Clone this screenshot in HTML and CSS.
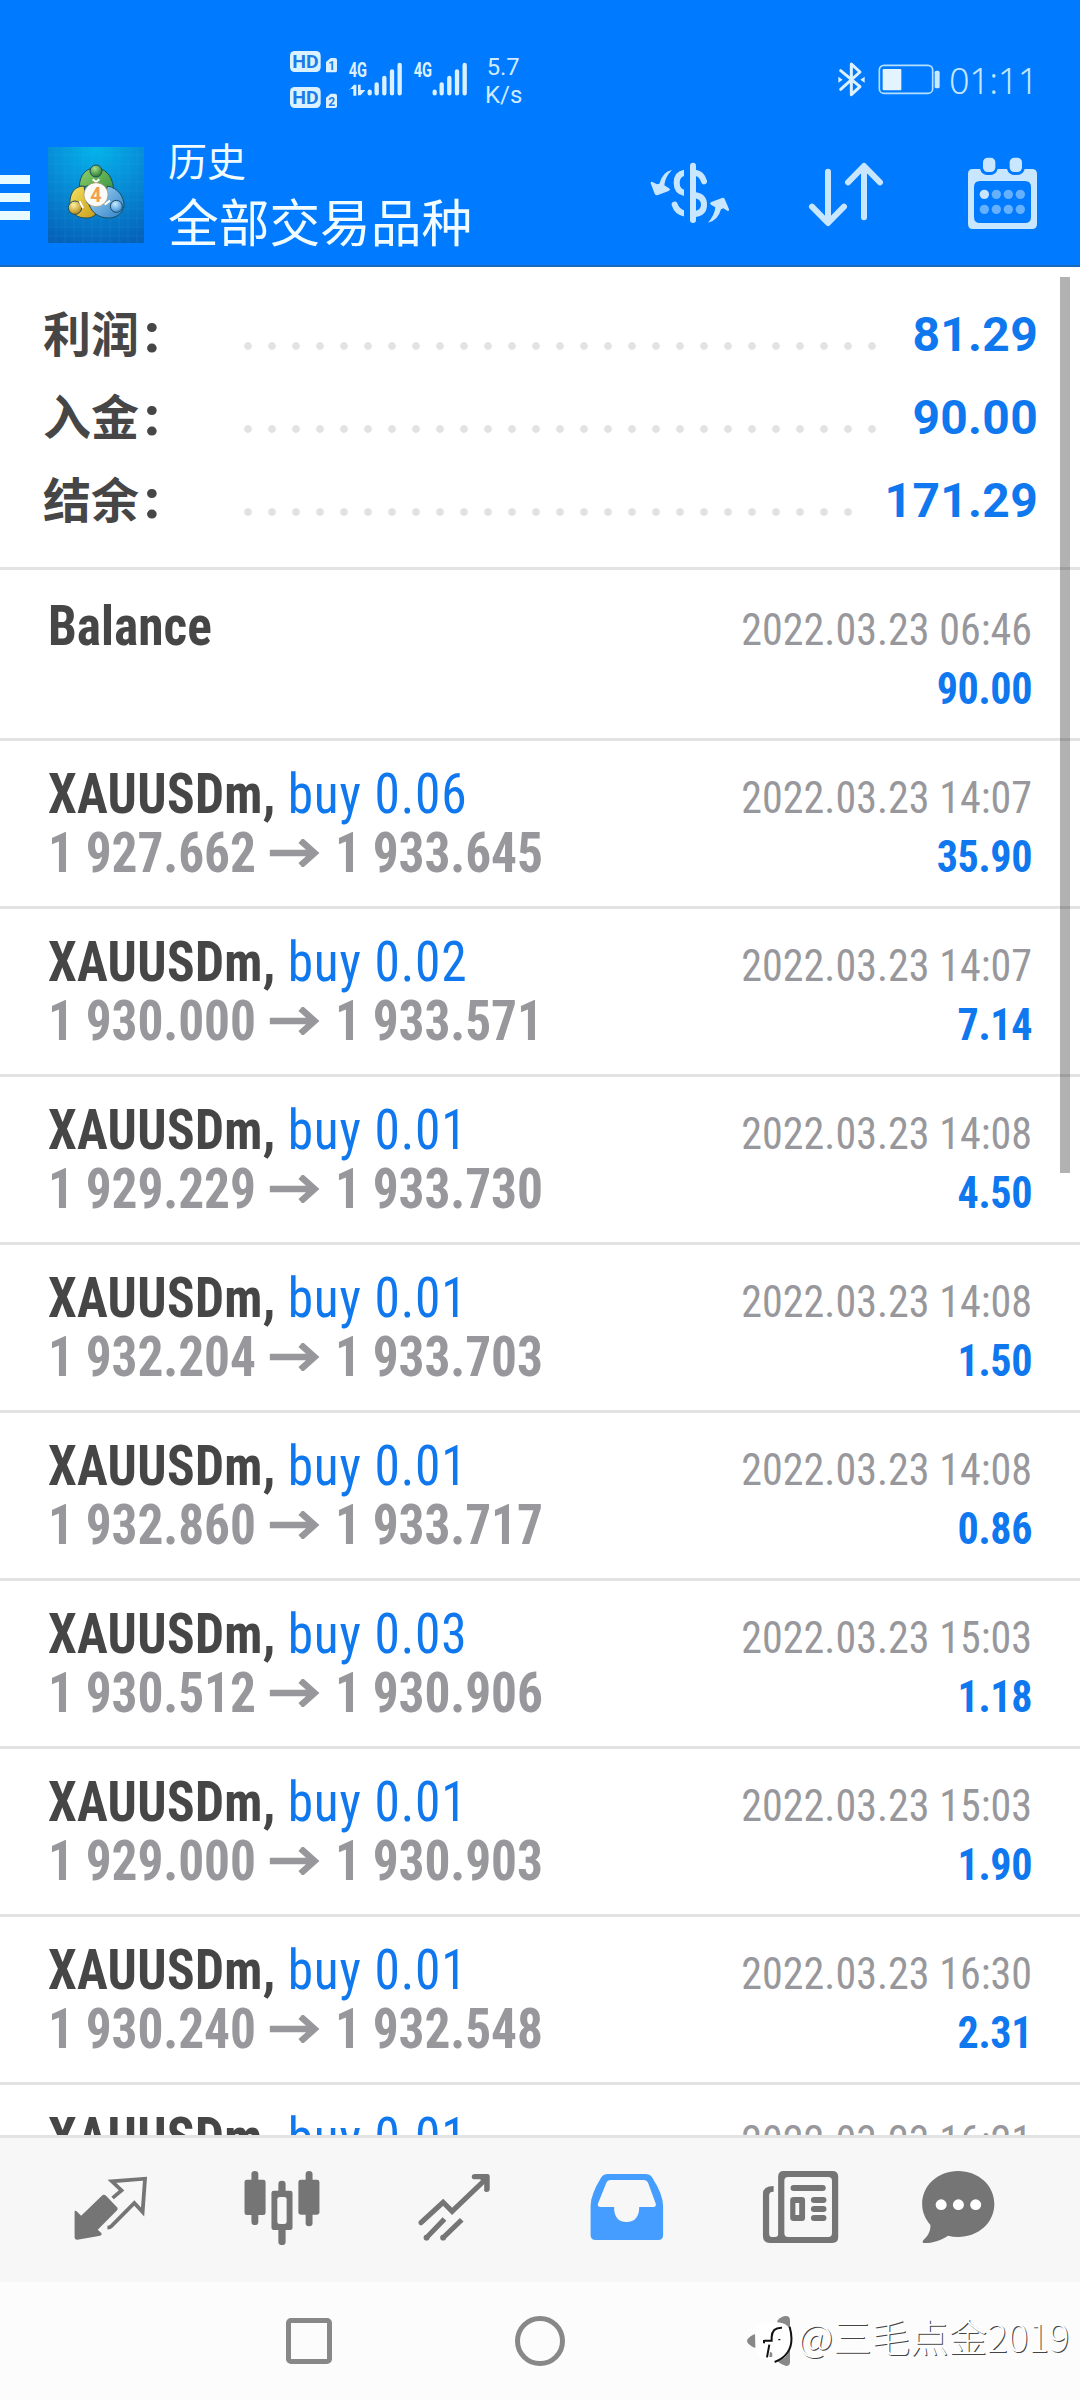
FILE: index.html
```html
<!DOCTYPE html>
<html lang="zh-CN">
<head>
<meta charset="utf-8">
<title>历史</title>
<link rel="stylesheet" href="styles.css">
</head>
<body>
<header class="header">
  <div class="status">
    <svg class="status-left" viewBox="0 0 840 240">
      <g fill="#dcf1ff">
        <rect x="60" y="33" width="92" height="63" rx="14"/>
        <rect x="60" y="141" width="92" height="63" rx="14"/>
        <path d="M168 97V66l14-12h13q6 0 6 6v32q0 5-6 5zM168 204v-31l14-12h13q6 0 6 6v32q0 5-6 5z"/>
        <text class="sig" x="236" y="111" textLength="55" lengthAdjust="spacingAndGlyphs">4G</text>
        <text class="sig" x="431" y="111" textLength="55" lengthAdjust="spacingAndGlyphs">4G</text>
        <path d="M238 150l14-16h7v33h-9v-20h-12zM264 134h8v16h14l-14 16h-8z"/>
      </g>
      <g class="bars">
        <path d="M299 155v5M320 133v27M343 114v46M366 94v66M389 75v85M494 155v5M515 133v27M538 114v46M561 94v66M584 75v85"/>
      </g>
      <g class="knock">
        <text x="67" y="84" textLength="79" lengthAdjust="spacingAndGlyphs">HD</text>
        <text x="67" y="192" textLength="79" lengthAdjust="spacingAndGlyphs">HD</text>
        <text class="sim" x="175" y="91">1</text>
        <text class="sim" x="175" y="198">2</text>
      </g>
      <g class="speed">
        <text x="650" y="105" textLength="99" lengthAdjust="spacingAndGlyphs">5.7</text>
        <text x="645" y="189" textLength="112" lengthAdjust="spacingAndGlyphs">K/s</text>
      </g>
    </svg>
    <div class="status-right">
      <svg class="status-icons" viewBox="48 30 318 114">
        <path d="M62 62l58 48-26 24V42l26 24-58 52" fill="none" stroke="#dcf1ff" stroke-width="9" stroke-linejoin="round" stroke-linecap="round"/>
        <path d="M55 80l13 9-13 9zM134 80l-13 9 13 9z" fill="#dcf1ff"/>
        <rect x="178" y="46" width="160" height="84" rx="14" fill="none" stroke="#b4e0ff" stroke-width="5"/>
        <rect x="188" y="57" width="56" height="64" rx="3" fill="#e4f4ff"/>
        <rect x="344" y="62" width="15" height="53" rx="5" fill="#c9e9ff"/>
      </svg>
      <span class="clock">01:11</span>
    </div>
  </div>
  <div class="appbar">
    <div class="menu"><i></i><i></i><i></i></div>
    <svg class="logo" viewBox="144 51 288 288">
      <defs>
        <radialGradient id="bg" cx=".5" cy="0" r="1.05"><stop offset="0" stop-color="#03b4ea"/><stop offset=".45" stop-color="#078fd8"/><stop offset="1" stop-color="#0562b8"/></radialGradient>
        <linearGradient id="gr" x1="0" y1="0" x2="1" y2="1"><stop offset="0" stop-color="#8fd26b"/><stop offset="1" stop-color="#2c8a3a"/></linearGradient>
        <linearGradient id="ye" x1="0" y1="0" x2="1" y2="1"><stop offset="0" stop-color="#f6e45e"/><stop offset="1" stop-color="#c79a1a"/></linearGradient>
        <linearGradient id="bl" x1="0" y1="0" x2="1" y2="1"><stop offset="0" stop-color="#a6d9f6"/><stop offset="1" stop-color="#2f7fc8"/></linearGradient>
        <radialGradient id="gb" cx=".4" cy=".3" r=".7"><stop offset="0" stop-color="#a7e08a"/><stop offset="1" stop-color="#2c7a35"/></radialGradient>
        <radialGradient id="yb" cx=".4" cy=".3" r=".7"><stop offset="0" stop-color="#fff0a0"/><stop offset="1" stop-color="#b58a18"/></radialGradient>
        <radialGradient id="bb" cx=".4" cy=".3" r=".7"><stop offset="0" stop-color="#c8ebff"/><stop offset="1" stop-color="#3c8fd6"/></radialGradient>
      </defs>
      <rect x="144" y="51" width="288" height="288" fill="url(#bg)"/>
      <path d="M168 51v288M195 51v288M222 51v288M249 51v288M276 51v288M303 51v288M330 51v288M357 51v288M384 51v288M411 51v288M144 75h288M144 102h288M144 129h288M144 156h288M144 183h288M144 210h288M144 237h288M144 264h288M144 291h288M144 318h288" stroke="#4cc0f4" stroke-opacity=".18" stroke-width="2"/>
      <g stroke="#1c4d5c" stroke-width="3">
        <path d="M238 168c2-34 20-54 48-54s50 22 54 56c1 20-8 34-22 40l-30-50-34 10z" fill="url(#gr)"/>
        <path d="M252 168c-34 0-44 30-42 56 4 28 22 40 48 40 18 0 26-6 32-16l-30-30z" fill="url(#ye)"/>
        <path d="M322 168c34 6 50 34 50 58-4 26-24 38-46 38-32 0-50-18-58-38l44-8z" fill="url(#bl)"/>
        <circle cx="288" cy="123" r="18" fill="url(#gb)"/>
        <circle cx="225" cy="233" r="20" fill="url(#yb)"/>
        <circle cx="349" cy="229" r="18" fill="url(#bb)"/>
      </g>
      <path d="M278 148l10 8 10-8M239 214l10 20M314 224l16-12" fill="none" stroke="#fff" stroke-width="6"/>
      <circle cx="288" cy="194" r="36" fill="#fbfbf8" stroke="#a88b62" stroke-width="2"/>
      <text class="four" x="288" y="215" text-anchor="middle">4</text>
    </svg>
    <div class="titles">
      <div class="title-small">历史</div>
      <div class="title-big">全部交易品种</div>
    </div>
    <svg class="act act-currency" viewBox="90 78 240 222">
      <g fill="none" stroke="#c9e6ff" stroke-width="18" stroke-linecap="round">
        <path d="M226 128q20 3 26 26M222 195q30 3 30 29t-30 28"/>
        <path d="M194 128q-24 4-24 30t24 31M164 224q7 22 30 27"/>
      </g>
      <path d="M192 110h18v160h-18z" fill="#007aff"/>
      <path d="M219 107v163" stroke="#c9e6ff" stroke-width="18" stroke-linecap="round"/>
      <path d="M156 120q-29 6-38 41l-7 2-15-8q-5 0-4 5l12 31q3 6 10 4l32-12q7-4 1-8l-14-9q1-24 23-46zM264 278q30-6 39-40l7-3 13 8q5 1 4-5l-12-29q-2-7-9-5l-32 12q-7 4-1 8l13 8q-2 23-22 46z" fill="#c9e6ff"/>
    </svg>
    <svg class="act act-sort" viewBox="564 78 228 222">
      <path d="M624 125v152M576 230l48 49 48-49M732 262V110M684 157l48-49 48 49" fill="none" stroke="#c9e6ff" stroke-width="18" stroke-linecap="round" stroke-linejoin="round"/>
    </svg>
    <svg class="act act-cal" viewBox="1041 78 213 222">
      <path fill-rule="evenodd" d="M1058 117h22q5 18 24 18h5q19 0 24-18h28q5 18 24 18h5q19 0 24-18h22q15 0 15 15v150q0 15-15 15h-178q-14 0-14-15V132q0-15 14-15zM1080 153q-18 0-18 18v90q0 18 18 18h135q18 0 18-18v-90q0-18-18-18z" fill="#c9e6ff"/>
      <rect x="1089" y="83" width="37" height="43" rx="14" fill="#c9e6ff"/>
      <rect x="1169" y="83" width="37" height="43" rx="14" fill="#c9e6ff"/>
      <circle cx="1093" cy="193" r="14" fill="#c9e6ff"/>
      <g fill="#65b0ff"><circle cx="1129" cy="193" r="14"/><circle cx="1165" cy="193" r="14"/><circle cx="1201" cy="193" r="14"/><circle cx="1093" cy="238" r="14"/><circle cx="1129" cy="238" r="14"/><circle cx="1165" cy="238" r="14"/><circle cx="1201" cy="238" r="14"/></g>
    </svg>
  </div>
</header>

<main class="list">
  <section class="summary">
    <div class="sum"><span class="sum-label">利润<i>:</i></span><span class="dots"></span><b>81.29</b></div>
    <div class="sum"><span class="sum-label">入金<i>:</i></span><span class="dots"></span><b>90.00</b></div>
    <div class="sum"><span class="sum-label">结余<i>:</i></span><span class="dots"></span><b>171.29</b></div>
  </section>
  <div class="row row-balance"><div class="l"><div class="sym">Balance</div></div><div class="r"><div class="date">2022.03.23 06:46</div><div class="val">90.00</div></div></div>
  <div class="row"><div class="l"><div class="sym">XAUUSDm, <span>buy 0.06</span></div><div class="price">1 927.662<svg class="arrow" viewBox="0 0 52 28" preserveAspectRatio="none"><path d="M0 14h46M31 1.500L45 14 31 26.500"/></svg>1 933.645</div></div><div class="r"><div class="date">2022.03.23 14:07</div><div class="val">35.90</div></div></div>
  <div class="row"><div class="l"><div class="sym">XAUUSDm, <span>buy 0.02</span></div><div class="price">1 930.000<svg class="arrow" viewBox="0 0 52 28" preserveAspectRatio="none"><path d="M0 14h46M31 1.500L45 14 31 26.500"/></svg>1 933.571</div></div><div class="r"><div class="date">2022.03.23 14:07</div><div class="val">7.14</div></div></div>
  <div class="row"><div class="l"><div class="sym">XAUUSDm, <span>buy 0.01</span></div><div class="price">1 929.229<svg class="arrow" viewBox="0 0 52 28" preserveAspectRatio="none"><path d="M0 14h46M31 1.500L45 14 31 26.500"/></svg>1 933.730</div></div><div class="r"><div class="date">2022.03.23 14:08</div><div class="val">4.50</div></div></div>
  <div class="row"><div class="l"><div class="sym">XAUUSDm, <span>buy 0.01</span></div><div class="price">1 932.204<svg class="arrow" viewBox="0 0 52 28" preserveAspectRatio="none"><path d="M0 14h46M31 1.500L45 14 31 26.500"/></svg>1 933.703</div></div><div class="r"><div class="date">2022.03.23 14:08</div><div class="val">1.50</div></div></div>
  <div class="row"><div class="l"><div class="sym">XAUUSDm, <span>buy 0.01</span></div><div class="price">1 932.860<svg class="arrow" viewBox="0 0 52 28" preserveAspectRatio="none"><path d="M0 14h46M31 1.500L45 14 31 26.500"/></svg>1 933.717</div></div><div class="r"><div class="date">2022.03.23 14:08</div><div class="val">0.86</div></div></div>
  <div class="row"><div class="l"><div class="sym">XAUUSDm, <span>buy 0.03</span></div><div class="price">1 930.512<svg class="arrow" viewBox="0 0 52 28" preserveAspectRatio="none"><path d="M0 14h46M31 1.500L45 14 31 26.500"/></svg>1 930.906</div></div><div class="r"><div class="date">2022.03.23 15:03</div><div class="val">1.18</div></div></div>
  <div class="row"><div class="l"><div class="sym">XAUUSDm, <span>buy 0.01</span></div><div class="price">1 929.000<svg class="arrow" viewBox="0 0 52 28" preserveAspectRatio="none"><path d="M0 14h46M31 1.500L45 14 31 26.500"/></svg>1 930.903</div></div><div class="r"><div class="date">2022.03.23 15:03</div><div class="val">1.90</div></div></div>
  <div class="row"><div class="l"><div class="sym">XAUUSDm, <span>buy 0.01</span></div><div class="price">1 930.240<svg class="arrow" viewBox="0 0 52 28" preserveAspectRatio="none"><path d="M0 14h46M31 1.500L45 14 31 26.500"/></svg>1 932.548</div></div><div class="r"><div class="date">2022.03.23 16:30</div><div class="val">2.31</div></div></div>
  <div class="row row-cut"><div class="l"><div class="sym">XAUUSDm, <span>buy 0.01</span></div></div><div class="r"><div class="date">2022.03.23 16:21</div></div></div>
  <div class="scrollbar"></div>
</main>

<nav class="tabs">
  <svg class="tab" viewBox="193 324 252 240" preserveAspectRatio="none">
    <path d="M215 456q0-5 5-3l14 14 60-60q6-5 12 0l32 35q4 5 0 9l-56 58 11 11q2 6-4 7l-66 12q-8 1-8-7z" fill="#757575"/>
    <path d="M325 414l26-23-28-27 96-8-7 100-24-27-66 69q-4 5-12 5" fill="none" stroke="#757575" stroke-width="11"/>
  </svg>
  <svg class="tab" viewBox="693 324 252 240" preserveAspectRatio="none">
    <g fill="#757575"><rect x="709" y="359" width="61" height="106" rx="7"/><rect x="729" y="333" width="20" height="162" rx="10"/><rect x="865" y="359" width="61" height="105" rx="7"/><rect x="886" y="333" width="20" height="166" rx="10"/><rect x="807" y="362" width="21" height="193" rx="10"/><rect x="787" y="392" width="61" height="118" rx="7"/></g>
    <rect x="804" y="411" width="27" height="81" rx="7" fill="#f7f7f7"/>
  </svg>
  <svg class="tab" viewBox="1192 324 252 240" preserveAspectRatio="none">
    <g fill="none" stroke="#757575"><path d="M1221 488l64-61 26 27 98-97" stroke-width="15" stroke-linecap="round"/><path d="M1237 533l52-56M1285 533l54-54" stroke-width="15"/><path d="M1237 533v.1M1285 533v.1" stroke-width="17" stroke-linecap="round"/></g>
    <path d="M1377 342h36q7 0 7 7v38q0 9-9 9t-7-9v-19l-12-10h-15q-9 0-9-8t9-8z" fill="#757575"/>
  </svg>
  <svg class="tab" viewBox="124 324 252 240" preserveAspectRatio="none">
    <path fill-rule="evenodd" d="M196 342h109q12 0 19 10 32 52 32 86v88q0 14-14 14H161q-15 0-15-14v-88q0-34 31-86 7-10 19-10zM204 360q-9 0-13 10l-24 62q-1 9 7 9h40q0 45 36 45t37-45h41q8 0 7-9l-22-62q-4-10-14-10z" fill="#449dff"/>
  </svg>
  <svg class="tab" viewBox="623 324 252 240" preserveAspectRatio="none">
    <path fill-rule="evenodd" d="M706 333h141q17 0 17 17v182q0 17-17 17H666q-20 0-20-20V402q0-24 31-24v17q-13 0-13 10v116q0 10 10 10h7q9 0 9-9V350q0-17 16-17zM719 351q-11 0-11 11v158q0 11 11 11h116q11 0 11-11V362q0-11-11-11z" fill="#757575"/>
    <path d="M735 384h84M794 420h27M794 447h27M794 474h27" fill="none" stroke="#757575" stroke-width="18" stroke-linecap="round"/>
    <path fill-rule="evenodd" d="M735 411h24q9 0 9 9v54q0 9-9 9h-24q-10 0-10-9v-54q0-9 10-9zM740 429v36h11v-36z" fill="#757575"/>
  </svg>
  <svg class="tab" viewBox="1123 324 252 240" preserveAspectRatio="none">
    <path d="M1213 333c59 0 105 43 105 99s-46 99-105 99q-15 0-29-4c-22 15-44 22-68 22-7 0-7-5-3-9 16-16 20-28 20-45-15-18-24-38-24-63 0-56 46-99 104-99z" fill="#757575"/>
    <circle cx="1164" cy="434" r="16" fill="#fff"/><circle cx="1214" cy="434" r="16" fill="#fff"/><circle cx="1264" cy="434" r="16" fill="#fff"/>
  </svg>
</nav>

<footer class="sysnav">
  <div class="square"></div>
  <div class="circle"></div>
  <svg class="back" viewBox="75 99 150 165">
    <path d="M106 163v40q-8 0-20-11-10-9 0-18 12-11 20-11zM172 122q12-14 26-14 12 0 12 14v124q0 12-12 12-12-2-26-14z" fill="#888"/>
    <path d="M106 156q0-28 46-28 62-8 62 44 0 66-44 70l-50-8q-16-30-14-78z" fill="#fff"/>
    <path d="M186 143q-30-1-31 28v11h-22M132 180v10M148 194l-7 38M178 177v4M209 140q22 80-45 106" fill="none" stroke="#111" stroke-width="6"/>
    <path d="M150 215q10 2 6 16h-8zM184 243l20-12v20z" fill="#888"/>
  </svg>
  <div class="watermark">@三毛点金2019</div>
</footer>
</body>
</html>
```
FILE: styles.css
```css
* { box-sizing: border-box; }
body {
  margin: 0;
  width: 1080px;
  height: 2400px;
  overflow: hidden;
  display: flex;
  flex-direction: column;
  background: #fff;
  font-family: Roboto, "Noto Sans CJK SC", sans-serif;
}
svg { display: block; flex: none; }

.header { height: 267px; background: #007aff; border-bottom: 2px solid #1a68b8; }
.status { height: 120px; display: flex; justify-content: space-between; padding: 40px 47px 0 270px; }
.status-left { width: 280px; height: 80px; }
.sig { font: 700 58px Roboto, sans-serif; }
.bars { stroke: #dcf1ff; stroke-width: 13; stroke-linecap: round; }
.knock { fill: #1c7ce8; font: 700 55px Roboto, sans-serif; }
.knock .sim { font-size: 36px; }
.speed { fill: #cdeaff; font: 400 69px Roboto, sans-serif; }
.status-right { display: flex; align-items: flex-start; padding-top: 20px; gap: 7px; }
.status-icons { width: 106px; height: 38px; }
.clock { font: 300 36px/42px "Noto Sans", sans-serif; letter-spacing: -.4px; color: #c4e7ff; width: 84px; white-space: nowrap; }

.appbar { display: flex; height: 145px; padding-top: 27px; padding-right: 42px; }
.menu { width: 30px; margin-right: 18px; padding-top: 28px; display: flex; flex-direction: column; gap: 9px; }
.menu i { height: 9px; background: #e8fbff; }
.logo { width: 96px; height: 96px; }
.four { font: 700 59px Roboto, sans-serif; fill: #f2a04c; }
.titles { margin: -14px 0 0 24px; color: #f0fcff; white-space: nowrap; flex: 1; }
.title-small { font: 400 39px/53px "Noto Sans CJK SC", sans-serif; }
.title-big { font: 400 50.700px/68px "Noto Sans CJK SC", sans-serif; }
.act { height: 74px; margin-top: 9px; }
.act-currency { width: 80px; }
.act-sort { width: 76px; margin-left: 78px; }
.act-cal { width: 71px; margin-left: 83px; }

.list { position: relative; height: 1868px; overflow: hidden; background: #fff; }
.summary { height: 303px; border-bottom: 3px solid #e3e3e3; padding: 26px 42px 0 43px; }
.sum { height: 83px; display: flex; align-items: center; }
.sum-label { font: 700 48px/83px "Noto Sans CJK SC", sans-serif; color: #464646; width: 193px; height: 83px; margin-top: -7px; }
.sum-label i { font: 900 53px/50px Roboto, sans-serif; margin-left: 5px; }
.dots {
  flex: 1;
  height: 8px;
  margin: 23px 27px 0 0;
  background: radial-gradient(circle at 12px 4px, #e3e3e3 3.500px, transparent 4.200px) 0 0 / 24px 8px round;
  background-repeat: repeat-x;
}
.sum b { font: 700 48px/83px Roboto, sans-serif; letter-spacing: .3px; color: #0f78ee; margin-top: 0; }

.row {
  height: 168px;
  border-bottom: 3px solid #e3e3e3;
  padding: 24px 48px 0 48px;
  display: flex;
  justify-content: space-between;
  font-family: "Roboto Condensed", Roboto, sans-serif;
  font-stretch: 75%;
  line-height: 59px;
  white-space: nowrap;
}
.row-balance { height: 171px; padding-top: 27px; }
.row-balance .sym { letter-spacing: 0; }
.row-cut { border-bottom: 0; }
.l { transform: scaleX(.935); transform-origin: 0 0; }
.sym { font-size: 55px; font-weight: 700; letter-spacing: .3px; color: #464646; }
.sym span { font-weight: 400; letter-spacing: .9px; color: #0f78ee; }
.price { font-size: 55px; font-weight: 700; letter-spacing: -.1px; color: #98989c; display: flex; align-items: center; }
.arrow { width: 55.600px; height: 28px; margin: 0 14px 2px 15px; fill: none; stroke: #98989c; stroke-width: 6.500; }
.r { text-align: right; padding-top: 3px; font-size: 45px; transform: scaleX(.935); transform-origin: 100% 0; }
.date { color: #98989c; }
.val { font-weight: 700; letter-spacing: -.4px; color: #0f78ee; }
.scrollbar { position: absolute; left: 1060px; top: 10px; width: 10px; height: 896px; background: rgba(0, 0, 0, .3); }

.tabs {
  height: 147px;
  border-top: 3px solid #e3e3e3;
  background: #f7f7f7;
  padding: 30px 24px 0;
  display: grid;
  grid-template-columns: repeat(6, 172px);
  justify-items: center;
}
.tab { width: 87px; height: 80px; overflow: visible; }

.sysnav { position: relative; height: 118px; background: #fcfcfc; display: flex; align-items: center; padding: 0 0 1px 286px; }
.square { width: 46px; height: 46px; border: 5px solid #888; border-radius: 5px; margin-right: 183px; }
.circle { width: 50px; height: 50px; border: 5px solid #888; border-radius: 50%; }
.back { width: 50px; height: 55px; margin-left: 180px; }
.watermark {
  position: absolute;
  left: 798px;
  top: 25px;
  font: 300 38.500px/56px "Noto Sans CJK SC", sans-serif;
  color: #fff;
  text-shadow: 1px 1px 0 #444;
  white-space: nowrap;
}
```
